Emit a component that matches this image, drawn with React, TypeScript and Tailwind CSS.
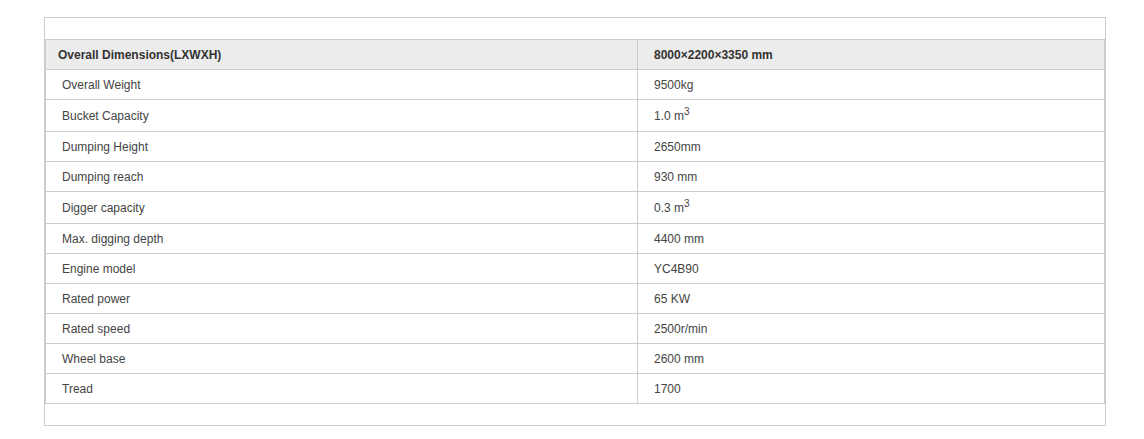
import React from "react";

type Spec = { label: string; value: React.ReactNode; tall?: boolean };

const Cube = () => <sup className="text-[10px] relative -top-[5px] align-baseline">3</sup>;

const specs: Spec[] = [
  { label: "Overall Weight", value: "9500kg" },
  { label: "Bucket Capacity", value: <>1.0 m<Cube /></>, tall: true },
  { label: "Dumping Height", value: "2650mm" },
  { label: "Dumping reach", value: "930 mm" },
  { label: "Digger capacity", value: <>0.3 m<Cube /></>, tall: true },
  { label: "Max. digging depth", value: "4400 mm" },
  { label: "Engine model", value: "YC4B90" },
  { label: "Rated power", value: "65 KW" },
  { label: "Rated speed", value: "2500r/min" },
  { label: "Wheel base", value: "2600 mm" },
  { label: "Tread", value: "1700" },
];

export default function App() {
  return (
    <div className="w-[1144px] h-[439px] bg-white pt-[17px] pl-[44px] font-['Liberation_Sans',Arial,sans-serif] text-[12px]">
      <div className="w-[1062px] border border-[#ccc] pt-[21px] pb-[21px]">
        <div className="w-[1060px] border border-[#ccc]">
          {/* header row */}
          <div className="flex h-[30px] bg-[#ececec] border-b border-[#ccc] font-bold text-[#333]">
            <div className="w-[592px] border-r border-[#ccc] pl-[12px] flex items-center">
              Overall Dimensions(LXWXH)
            </div>
            <div className="flex-1 pl-[16px] flex items-center">8000×2200×3350 mm</div>
          </div>
          {specs.map((s, i) => {
            const last = i === specs.length - 1;
            const h = s.tall ? "h-[32px]" : last ? "h-[29px]" : "h-[30px]";
            return (
              <div key={s.label} className={`flex text-[#444] ${h} ${last ? "" : "border-b border-[#ccc]"}`}>
                <div className="w-[592px] border-r border-[#ccc] pl-[16px] flex items-center">{s.label}</div>
                <div className="flex-1 pl-[16px] flex items-center">
                  <span>{s.value}</span>
                </div>
              </div>
            );
          })}
        </div>
      </div>
    </div>
  );
}
